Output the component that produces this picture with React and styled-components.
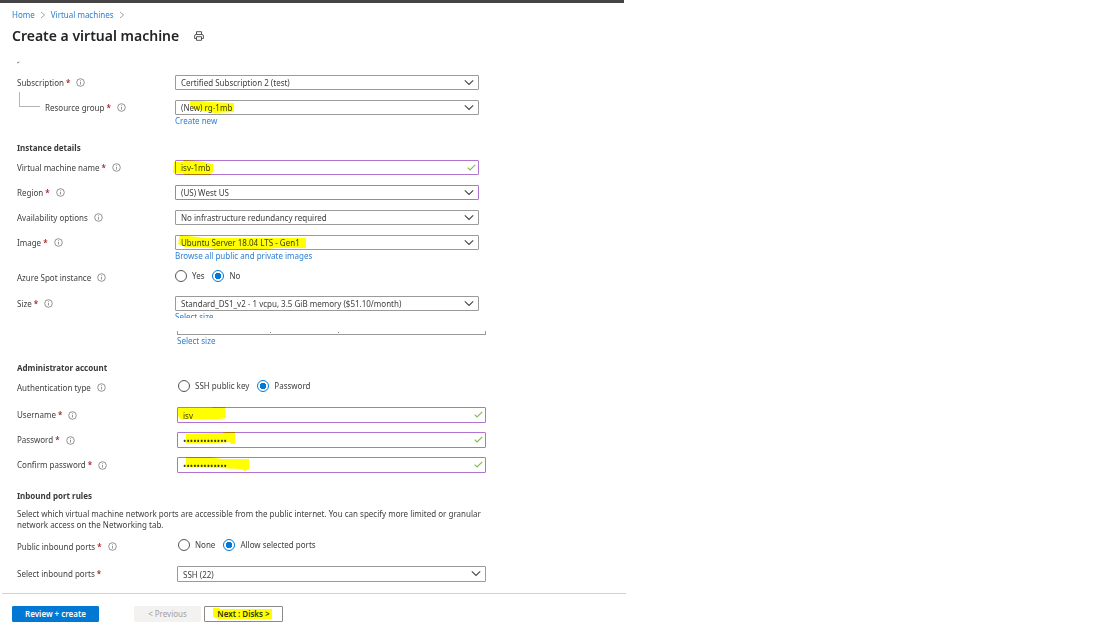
import React from "react";
import styled, { createGlobalStyle, css } from "styled-components";

const GlobalStyle = createGlobalStyle`
  * { box-sizing: border-box; }
  body {
    margin: 0;
    background: #fff;
    color: #404040;
    font-family: "Noto Sans", "Open Sans", sans-serif;
    font-size: 8px;
    line-height: 12px;
  }
  button, input, select { font: inherit; color: inherit; }
`;

const Blade = styled.main`
  width: 100%;
  max-width: 626px;
`;

const TopBar = styled.div`
  height: 3px;
  margin-right: 2px;
  background: #454344;
`;

const Header = styled.header`
  padding: 6px 12px 0;
`;

const Breadcrumb = styled.nav`
  display: flex;
  align-items: center;
  gap: 5px;
  font-size: 8px;
`;

const Link = styled.a`
  color: #2a7fd2;
  text-decoration: none;
`;

const TitleRow = styled.div`
  display: flex;
  align-items: center;
  gap: 15px;
  margin-top: 5px;
`;

const Title = styled.h1`
  margin: 0;
  color: #252423;
  font-size: 14px;
  line-height: 20px;
  font-weight: 600;
`;

const PrintButton = styled.button`
  display: flex;
  padding: 0;
  border: 0;
  background: none;
  color: #444;
`;

const Fragment = styled.div`
  height: 29px;
  padding: 15px 17px 0;
  line-height: 0;
`;

const Section = styled.section`
  padding-left: 17px;
  padding-top: ${(p) => p.$top || 0}px;
`;

const SectionTitle = styled.h2`
  margin: 0 0 6px;
  color: #3a3a3a;
  font-size: 8px;
  line-height: 12px;
  font-weight: 700;
`;

const Note = styled.p`
  margin: 0 0 9px;
  max-width: 470px;
  line-height: 11px;
`;

const Rows = styled.div`
  display: flex;
  flex-direction: column;
  gap: ${(p) => p.$gap || 10}px;
`;

const Row = styled.div`
  display: grid;
  grid-template-columns: ${(p) =>
    p.$wide ? "160px minmax(0, 309px)" : "158px minmax(0, 304px)"};
  align-items: start;
`;

const LabelCell = styled.div`
  display: flex;
  align-items: center;
  height: ${(p) => (p.$tall ? 16 : 15)}px;
  padding-left: ${(p) => (p.$nested ? 28 : 0)}px;
  position: relative;
  white-space: nowrap;
`;

const Elbow = styled.span`
  position: absolute;
  left: 2px;
  bottom: 8px;
  width: 21px;
  height: 15px;
  border: solid #b5b5b5;
  border-width: 0 0 1px 1px;
`;

const Star = styled.span`
  margin-left: 2px;
  color: #a4262c;
  font-weight: 600;
`;

const InfoSvg = styled.svg`
  margin-left: 6px;
  flex: none;
`;

const Field = styled.div`
  display: flex;
  flex-direction: column;
  align-items: flex-start;
`;

const ControlBox = styled.div`
  position: relative;
  width: 100%;
`;

const controlLook = css`
  display: block;
  width: 100%;
  height: ${(p) => (p.$tall ? 16 : 15)}px;
  padding: 0 20px 0 5px;
  border: 1px solid ${(p) => (p.$changed ? "#b073cf" : "#9a9a9a")};
  border-radius: 1px;
  background: #fff;
  line-height: 13px;
  outline: none;
  appearance: none;
`;

const SelectInput = styled.select`
  ${controlLook}
`;

const TextInput = styled.input`
  ${controlLook}
  &[type="password"] {
    font-size: 9px;
  }
`;

const TrailIcon = styled.svg`
  position: absolute;
  right: ${(p) => (p.$check ? 3 : 5)}px;
  top: 4px;
  pointer-events: none;
`;

const Marker = styled.svg`
  position: absolute;
  left: 0;
  top: -3px;
  width: 140px;
  height: 20px;
  overflow: visible;
  pointer-events: none;
  mix-blend-mode: multiply;
  fill: #ffff00;
`;

const ClippedLine = styled.div`
  height: 7px;
  overflow: hidden;
`;

const CutControl = styled.div`
  width: 100%;
  height: 4px;
  border: solid #9a9a9a;
  border-width: 0 1px 1px;
  line-height: 0;
`;

const RadioGroup = styled.div`
  display: flex;
  align-items: center;
  gap: 8px;
  height: 12px;
  padding-left: ${(p) => (p.$wide ? 1 : 0)}px;
`;

const RadioLabel = styled.label`
  display: flex;
  align-items: center;
  gap: 5px;
`;

const Radio = styled.input`
  appearance: none;
  width: 12px;
  height: 12px;
  margin: 0;
  border: 1px solid #555;
  border-radius: 50%;
  background: #fff;
  &:checked {
    border-color: #0078d4;
    background: radial-gradient(circle, #0078d4 0 3px, #fff 3px);
  }
`;

const Footer = styled.footer`
  display: flex;
  margin: 11px 0 0 2px;
  padding: 12px 10px 0;
  border-top: 1px solid #d2d2d2;
`;

const Button = styled.button`
  position: relative;
  min-width: ${(p) => p.$width}px;
  height: 16px;
  padding: 0;
  border: 1px solid #8a8a8a;
  border-radius: 1px;
  background: #fff;
  line-height: 14px;
  font-weight: 600;
  color: #333;
  ${(p) =>
    p.$kind === "primary" &&
    css`
      margin-right: 35px;
      border-color: #0078d4;
      background: #0078d4;
      color: #fff;
    `}
  ${(p) =>
    p.$kind === "disabled" &&
    css`
      margin-right: 3px;
      border-color: #f3f2f1;
      background: #f3f2f1;
      color: #a19f9d;
      font-weight: 400;
    `}
`;

const Crumb = () => (
  <svg width="6" height="8" viewBox="0 0 6 8" fill="none" stroke="#999" strokeWidth="0.9" aria-hidden="true">
    <path d="M1 1 L4.5 4 L1 7" />
  </svg>
);

const Info = () => (
  <InfoSvg width="9" height="9" viewBox="0 0 9 9" fill="none" stroke="#777" strokeWidth="0.8" aria-hidden="true">
    <circle cx="4.5" cy="4.5" r="3.8" />
    <path d="M4.5 4v2.5M4.5 2.3v.9" />
  </InfoSvg>
);

const Printer = () => (
  <svg width="10" height="10" viewBox="0 0 10 10" fill="none" stroke="currentColor" strokeWidth="0.9" aria-hidden="true">
    <path d="M2.5 3.5V.7h5v2.8M2.5 7.5H.6V5q0-1.5 1.5-1.5h5.8q1.5 0 1.5 1.5v2.5H7.5M2.5 5.7h5v3.6h-5z" />
  </svg>
);

const Chevron = () => (
  <TrailIcon width="10" height="7" viewBox="0 0 10 7" fill="none" stroke="#444" strokeWidth="1.1">
    <path d="M.8 1.4 L5 5.4 L9.2 1.4" />
  </TrailIcon>
);

const Check = () => (
  <TrailIcon $check width="9" height="7" viewBox="0 0 9 7" fill="none" stroke="#7dbb4c" strokeWidth="1.1">
    <path d="M.7 3.7 L3 5.9 L8.3 .8" />
  </TrailIcon>
);

const Highlight = ({ d }) => (
  <Marker aria-hidden="true">
    <path d={d} />
  </Marker>
);

function LabelText({ id, text, required, info = true, nested, tall }) {
  return (
    <LabelCell $nested={nested} $tall={tall}>
      {nested && <Elbow />}
      {id ? <label htmlFor={id}>{text}</label> : <span>{text}</span>}
      {required && <Star>*</Star>}
      {info && <Info />}
    </LabelCell>
  );
}

function SelectRow({ id, label, value, changed, mark, wide, children, ...rest }) {
  return (
    <Row $wide={wide}>
      <LabelText id={id} text={label} tall={wide} {...rest} />
      <Field>
        <ControlBox>
          <SelectInput id={id} $changed={changed} $tall={wide}>
            <option>{value}</option>
          </SelectInput>
          <Chevron />
          {mark && <Highlight d={mark} />}
        </ControlBox>
        {children}
      </Field>
    </Row>
  );
}

function InputRow({ id, label, value, type = "text", mark, wide }) {
  return (
    <Row $wide={wide}>
      <LabelText id={id} text={label} required tall={wide} />
      <ControlBox>
        <TextInput id={id} type={type} defaultValue={value} $changed $tall={wide} />
        <Check />
        <Highlight d={mark} />
      </ControlBox>
    </Row>
  );
}

function RadioRow({ name, label, options, required, wide }) {
  return (
    <Row $wide={wide}>
      <LabelText text={label} required={required} />
      <RadioGroup role="radiogroup" aria-label={label} $wide={wide}>
        {options.map((o, i) => (
          <RadioLabel key={o}>
            <Radio type="radio" name={name} defaultChecked={i === 1} />
            {o}
          </RadioLabel>
        ))}
      </RadioGroup>
    </Row>
  );
}

export default function App() {
  return (
    <>
      <GlobalStyle />
      <Blade>
        <TopBar />
        <Header>
          <Breadcrumb>
            <Link href="#home">Home</Link>
            <Crumb />
            <Link href="#vms">Virtual machines</Link>
            <Crumb />
          </Breadcrumb>
          <TitleRow>
            <Title>Create a virtual machine</Title>
            <PrintButton aria-label="Print">
              <Printer />
            </PrintButton>
          </TitleRow>
        </Header>
        <Fragment>
          <svg width="3" height="3" stroke="#777" strokeWidth="0.9" aria-hidden="true">
            <path d="M0 2 L2.5 1" />
          </svg>
        </Fragment>

        <Section>
          <Rows>
            <SelectRow id="sub" label="Subscription" required value="Certified Subscription 2 (test)" />
            <SelectRow
              id="rg"
              label="Resource group"
              required
              nested
              value="(New) rg-1mb"
              mark="M15 4 L28 4 L35 5 L59 6 L59 15 L40 16 L30 14 L18 12 L15 8Z"
            >
              <Link href="#new">Create new</Link>
            </SelectRow>
          </Rows>
        </Section>

        <Section $top={15}>
          <SectionTitle>Instance details</SectionTitle>
          <Rows>
            <InputRow
              id="vm"
              label="Virtual machine name"
              value="isv-1mb"
              mark="M-1 5 L8 5 L9 3 L24 4 L38 7 L38 15 L35 18 L9 18 L8 16 L-2 16Z"
            />
            <SelectRow id="region" label="Region" required changed value="(US) West US" />
            <SelectRow id="avail" label="Availability options" value="No infrastructure redundancy required" />
            <SelectRow
              id="image"
              label="Image"
              required
              value="Ubuntu Server 18.04 LTS - Gen1"
              mark="M5 3 L14 4 L30 6 L131 6 L131 16 L100 16 L88 18 L50 18 L34 16 L10 15 L3 12Z"
            >
              <Link href="#images">Browse all public and private images</Link>
            </SelectRow>
          </Rows>
        </Section>

        <Section $top={8}>
          <Rows $gap={11}>
            <RadioRow name="spot" label="Azure Spot instance" options={["Yes", "No"]} />
            <SelectRow
              id="size"
              label="Size"
              required
              value="Standard_DS1_v2 - 1 vcpu, 3.5 GiB memory ($51.10/month)"
            >
              <ClippedLine>
                <Link href="#size">Select size</Link>
              </ClippedLine>
            </SelectRow>
          </Rows>
        </Section>

        <Section $top={13}>
          <Row $wide>
            <span />
            <Field>
              <CutControl>
                <svg width="240" height="2" fill="#888" aria-hidden="true">
                  <path d="M92 0h1v1h-1zM160 0h1v1h-1z" />
                </svg>
              </CutControl>
              <Link href="#select-size">Select size</Link>
            </Field>
          </Row>
        </Section>

        <Section $top={15}>
          <SectionTitle>Administrator account</SectionTitle>
          <Rows $gap={12}>
            <RadioRow wide name="auth" label="Authentication type" options={["SSH public key", "Password"]} />
            <Rows $gap={9}>
              <InputRow
                wide
                id="user"
                label="Username"
                value="isv"
                mark="M1 4 L35 4 L36 3 L48 3 L49 14 L42 15 L3 15 L1 12Z"
              />
              <InputRow
                wide
                id="pw"
                label="Password"
                type="password"
                value="Passw0rd12345"
                mark="M9 5 L45 4 L48 3 L58 3 L58 15 L54 15 L53 13 L40 14 L9 14Z"
              />
              <InputRow
                wide
                id="pw2"
                label="Confirm password"
                type="password"
                value="Passw0rd12345"
                mark="M9 3 L33 3 L45 5 L72 5 L72 15 L68 17 L64 15 L40 14 L9 13Z"
              />
            </Rows>
          </Rows>
        </Section>

        <Section $top={17}>
          <SectionTitle>Inbound port rules</SectionTitle>
          <Note>
            Select which virtual machine network ports are accessible from the public internet. You can specify more
            limited or granular network access on the Networking tab.
          </Note>
          <Rows $gap={12}>
            <RadioRow wide name="ports" label="Public inbound ports" required options={["None", "Allow selected ports"]} />
            <SelectRow wide id="inbound" label="Select inbound ports" required info={false} value="SSH (22)" />
          </Rows>
        </Section>

        <Footer>
          <Button $kind="primary" $width={87}>Review + create</Button>
          <Button $kind="disabled" $width={67} disabled>&lt; Previous</Button>
          <Button $width={79}>
            Next : Disks &gt;
            <Highlight d="M8 4 L14 4 L15 5 L67 5 L67 15 L14 15 L8 13Z" />
          </Button>
        </Footer>
      </Blade>
    </>
  );
}
